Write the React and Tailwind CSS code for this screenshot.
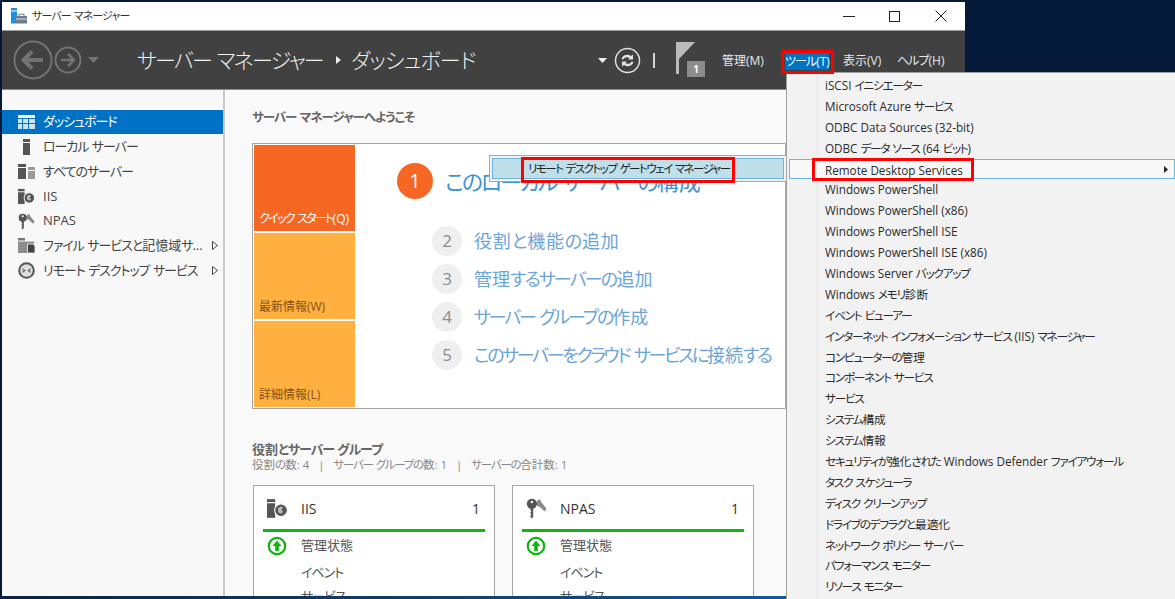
const FONT = "font-['Open_Sans','Noto_Sans_CJK_JP',sans-serif] [font-feature-settings:'palt']";

// Kana in the reference's UI font are much narrower than its kanji and Latin.
function K({ t, cls = "tracking-[-0.08em]" }) {
  return t.split(/([ぁ-んァ-ヶー・]+)/).map((part, i) =>
    i % 2 ? <span key={i} className={cls}>{part}</span> : part
  );
}

const sideItems = [
  { t: "ダッシュボード", icon: "dash", active: true },
  { t: "ローカル サーバー", icon: "local" },
  { t: "すべてのサーバー", icon: "all" },
  { t: "IIS", icon: "iis" },
  { t: "NPAS", icon: "npas" },
  { t: "ファイル サービスと記憶域サ...", icon: "file", arrow: true },
  { t: "リモート デスクトップ サービス", icon: "rds", arrow: true },
];

const menuItems = [
  "iSCSI イニシエーター", "Microsoft Azure サービス", "ODBC Data Sources (32-bit)", "ODBC データ ソース (64 ビット)",
  "Remote Desktop Services", "Windows PowerShell", "Windows PowerShell (x86)", "Windows PowerShell ISE",
  "Windows PowerShell ISE (x86)", "Windows Server バックアップ", "Windows メモリ診断", "イベント ビューアー",
  "インターネット インフォメーション サービス (IIS) マネージャー", "コンピューターの管理", "コンポーネント サービス", "サービス",
  "システム構成", "システム情報", "セキュリティが強化された Windows Defender ファイアウォール", "タスク スケジューラ",
  "ディスク クリーンアップ", "ドライブのデフラグと最適化", "ネットワーク ポリシー サーバー", "パフォーマンス モニター", "リソース モニター",
];

const steps = [
  { t: "役割と機能の追加", cls: "tracking-[0em]", outer: "tracking-[0.7px]" },
  { t: "管理するサーバーの追加", cls: "tracking-[-0.1em]", outer: "" },
  { t: "サーバー グループの作成", cls: "tracking-[-0.12em]", outer: "" },
  { t: "このサーバーをクラウド サービスに接続する", cls: "tracking-[-0.13em]", outer: "" },
];

function IisIcon({ c = "#555", size = 18 }) {
  return (
    <svg width={size} height={size} viewBox="0 0 18 18">
      <rect x="0" y="1" width="7" height="2.5" fill={c} />
      <rect x="0" y="4.5" width="7" height="12.5" fill={c} />
      <circle cx="12" cy="10.5" r="5.5" fill={c} stroke="#f8f8f8" strokeWidth="1" />
      <path d="M9.5 9c1-1.5 3-2 4-1 .5 1-1 1-1 2s1.500 1 1 2.500c-1 1-3 1-4-.5z" fill="#bbb" />
    </svg>
  );
}
function KeyIcon({ c = "#555", size = 18 }) {
  return (
    <svg width={size} height={size} viewBox="0 0 18 18">
      <path d="M8 4.500 L10.500 1.500 C12 1 13 2 13 3.500 L17.500 9 L16 11.500 L11 7 C10 7.500 9 6.500 8 4.500Z" fill="#8a8a8a" />
      <circle cx="5" cy="5" r="4.300" fill={c} />
      <circle cx="5" cy="3.400" r="1.100" fill="#f8f8f8" />
      <path d="M3.800 8h2.400v8l-1.200 1.600L3.800 16v-1.200l1-.8-1-.8v-1l1-.8-1-.8z" fill={c} />
    </svg>
  );
}
function SideIcon({ name }) {
  if (name === "dash")
    return (
      <svg width="17" height="14" viewBox="0 0 17 14">
        <rect width="17" height="3" fill="#fff" />
        <path d="M0 4h4v4H0zM5 4h5v4H5zM11 4h6v4h-6zM0 9h4v5H0zM5 9h5v5H5zM11 9h6v5h-6z" fill="#cfe3f3" />
      </svg>
    );
  if (name === "local")
    return (
      <svg width="17" height="16" viewBox="0 0 17 16">
        <rect x="5" y="0" width="7" height="3" fill="#555" />
        <rect x="5" y="4" width="7" height="12" fill="#555" />
      </svg>
    );
  if (name === "all")
    return (
      <svg width="17" height="15" viewBox="0 0 17 15">
        <rect x="0" y="0" width="8" height="3" fill="#555" />
        <rect x="0" y="4" width="8" height="11" fill="#555" />
        <rect x="10" y="3" width="7" height="3" fill="#999" />
        <rect x="10" y="7" width="7" height="8" fill="#999" />
      </svg>
    );
  if (name === "iis") return <IisIcon size={17} />;
  if (name === "npas") return <KeyIcon size={17} />;
  if (name === "file")
    return (
      <svg width="17" height="15" viewBox="0 0 17 15">
        <rect x="0" y="0" width="7" height="2.500" fill="#777" />
        <rect x="0" y="3.500" width="16" height="11.500" fill="#8c8c8c" />
        <path d="M9.500 6H15l2 2v7H9.500z" fill="#444" stroke="#f8f8f8" strokeWidth=".8" />
      </svg>
    );
  return (
    <svg width="17" height="17" viewBox="0 0 17 17">
      <circle cx="8.500" cy="8.500" r="7.300" fill="#ddd" stroke="#555" strokeWidth="2" />
      <path d="M4.500 7l2.300 1.600-2.300 1.600M12.500 7l-2.300 1.600 2.300 1.600" stroke="#555" strokeWidth="1.100" fill="none" />
    </svg>
  );
}

function UpIcon() {
  return (
    <svg width="20" height="20" viewBox="0 0 20 20">
      <circle cx="10" cy="10" r="8.200" fill="#fff" stroke="#0fb40f" strokeWidth="2.200" />
      <path d="M10 4.500 L14.500 10 H11.800 V15 H8.200 V10 H5.500Z" fill="#0fb40f" />
    </svg>
  );
}

function RoleCard({ icon, title }) {
  return (
    <div className="w-[242px] h-[120px] border border-[#a6a6a6] bg-white overflow-hidden px-[9px] shrink-0">
      <div className="flex items-center h-[46px] pt-[2px] border-b-[3px] border-[#0fb80f] text-[14px] text-[#333]">
        <div className="w-[38px] pl-[4px] flex items-center">{icon}</div>
        <span className="flex-1">{title}</span>
        <span className="pr-[5px]">1</span>
      </div>
      <div className="flex items-center h-[28px] text-[13px] text-[#555]">
        <div className="w-[38px] pl-[4px] flex items-center"><UpIcon /></div>
        <span>管理状態</span>
      </div>
      <div className="pl-[38px] h-[25px] leading-[25px] text-[13px] text-[#555]"><K t="イベント" /></div>
      <div className="pl-[38px] h-[24px] leading-[22px] text-[13px] text-[#555]"><K t="サービス" /></div>
    </div>
  );
}

const RedBox = ({ className }) => <div className={"absolute border-[3px] border-[#ff0000] " + className} />;

export default function App() {
  return (
    <div className={"relative w-[1175px] h-[599px] overflow-hidden bg-[#041a38] pt-[2px] flex flex-col " + FONT}>
      <div className="w-[963px] h-[594px] ml-[2px] bg-white flex flex-col overflow-hidden shrink-0">
        {/* title bar */}
        <div className="h-[29px] flex items-center bg-white border-b border-[#9a9a9a] shrink-0">
          <svg className="ml-[9px]" width="17" height="16" viewBox="0 0 17 16">
            <rect x="0" y="0" width="6" height="2.500" fill="#1f8ee0" />
            <rect x="0" y="3.500" width="6" height="12" fill="#1f8ee0" />
            <path d="M5 8h11v7.500H5z" fill="#6d7d8c" />
            <path d="M8 8V6.200h5V8" stroke="#6d7d8c" fill="none" />
            <rect x="5" y="10.500" width="11" height="1" fill="#dde" />
          </svg>
          <span className="ml-[4px] text-[11px] text-[#333]"><K t="サーバー マネージャー" /></span>
          <div className="ml-auto flex items-center">
            <div className="w-[12px] h-[1px] bg-[#222] mr-[34px]" />
            <div className="w-[11px] h-[11px] border border-[#222] mr-[35px]" />
            <svg className="mr-[18px]" width="12" height="12" viewBox="0 0 12 12"><path d="M.5.500l11 11M11.500.500l-11 11" stroke="#222" strokeWidth="1" /></svg>
          </div>
        </div>
        {/* header */}
        <div className="h-[59px] bg-[#414141] flex items-center shrink-0 border-b border-[#8a8a8a]">
          <svg className="ml-[11px]" width="40" height="40" viewBox="0 0 40 40">
            <circle cx="20" cy="20" r="18.500" fill="none" stroke="#737373" strokeWidth="2" />
            <path d="M30 20H11M19 11.500 10.500 20l8.500 8.500" fill="none" stroke="#737373" strokeWidth="4" />
          </svg>
          <svg className="ml-[1px]" width="28" height="28" viewBox="0 0 28 28">
            <circle cx="14" cy="14" r="12.500" fill="none" stroke="#737373" strokeWidth="2" />
            <path d="M7 14h13M14 8l6 6-6 6" fill="none" stroke="#737373" strokeWidth="2.600" />
          </svg>
          <svg className="ml-[6px]" width="11" height="6" viewBox="0 0 11 6"><path d="M0 0h11L5.500 6z" fill="#737373" /></svg>
          <span className="ml-[38px] mt-[1px] text-[21px] text-[#f0f0f0] font-light whitespace-nowrap"><K t="サーバー マネージャー" /></span>
          <svg className="ml-[13px]" width="5" height="8" viewBox="0 0 5 8"><path d="M0 0l5 4-5 4z" fill="#eee" /></svg>
          <span className="ml-[10px] mt-[1px] text-[21px] text-[#f0f0f0] font-light whitespace-nowrap"><K t="ダッシュボード" cls="tracking-[-0.04em]" /></span>
          <div className="ml-auto flex items-center text-[12px] text-[#e8e8e8]">
            <svg width="9" height="5" viewBox="0 0 9 5"><path d="M0 0h9L4.500 5z" fill="#eee" /></svg>
            <svg className="ml-[7px]" width="27" height="27" viewBox="0 0 27 27">
              <circle cx="13.500" cy="13.500" r="12" fill="none" stroke="#e0e0e0" strokeWidth="1.500" />
              <path d="M7.500 12c1-4 6-5.500 9.500-3l2-1.500v5h-5l1.500-1.500c-2-1.500-5-1-6 1.500zM19.500 15c-1 4-6 5.500-9.500 3l-2 1.500v-5h5L11.500 16c2 1.500 5 1 6-1.500z" fill="#e0e0e0" />
            </svg>
            <div className="ml-[12px] w-[2px] h-[15px] bg-[#d0d0d0]" />
            <div className="relative ml-[21px] w-[30px] h-[34px] mt-[-2px]">
              <svg width="20" height="32" viewBox="0 0 20 32">
                <path d="M0 0h3v32H0z" fill="#bbb" />
                <path d="M3 0h16L3 17z" fill="#bbb" />
              </svg>
              <div className="absolute left-[11px] top-[19px] w-[18px] h-[16px] bg-[#8c8c8c] text-white text-[10px] font-bold flex items-center justify-center">1</div>
            </div>
            <span className="ml-[16px] mt-[2px] w-[43px] whitespace-nowrap">管理(M)</span>
            <span className="ml-[20px] mt-[2px] w-[44px] bg-[#0072c6] text-white text-center leading-[17px] h-[17px] whitespace-nowrap"><K t="ツール" />(T)</span>
            <span className="ml-[14px] mt-[2px] w-[41px] whitespace-nowrap">表示(V)</span>
            <span className="ml-[13px] mt-[2px] w-[45px] mr-[23px] whitespace-nowrap"><K t="ヘルプ" />(H)</span>
          </div>
        </div>
        {/* body */}
        <div className="flex flex-1 min-h-0">
          <aside className="w-[221px] shrink-0 bg-[#f8f8f8] pt-[19.5px]">
            {sideItems.map((it) => (
              <div key={it.t} className={"h-[24.8px] flex items-center text-[13px] " + (it.active ? "bg-[#0072c6] text-white" : "text-[#444]")}>
                <div className="w-[41px] pl-[16px] flex items-center"><SideIcon name={it.icon} /></div>
                <span className="flex-1 whitespace-nowrap"><K t={it.t} /></span>
                {it.arrow && (
                  <svg className="mr-[5px]" width="6" height="9" viewBox="0 0 6 9"><path d="M.5.500l5 4-5 4z" fill="#fff" stroke="#444" /></svg>
                )}
              </div>
            ))}
          </aside>
          <main className="flex-1 min-w-0 bg-[#f9f9f9] border-l-2 border-[#c9c9c9] pl-[27px] pt-[20px] overflow-hidden">
            <div className="text-[12.5px] font-semibold text-[#666] leading-[16px]"><K t="サーバー マネージャーへようこそ" /></div>
            <div className="mt-[17px] w-[534px] h-[266px] border border-[#a8a8a8] bg-white flex p-[1px]">
              <div className="w-[101px] shrink-0 flex flex-col gap-[2px] text-[12px] whitespace-nowrap">
                <div className="flex-1 bg-[#f56722] text-white flex items-end px-[5px] pb-[3px]"><span><K t="クイック スタート(Q)" cls="tracking-[-0.14em]" /></span></div>
                <div className="flex-1 bg-[#ffb03e] text-[#8a5015] flex items-end px-[5px] pb-[3px]">最新情報(W)</div>
                <div className="flex-1 bg-[#ffb03e] text-[#8a5015] flex items-end px-[5px] pb-[3px]">詳細情報(L)</div>
              </div>
              <div className="pl-[42px] pt-[18px]">
                <div className="flex items-center h-[36px]">
                  <div className="w-[36px] h-[36px] rounded-full bg-[#f56722] text-white text-[20px] flex items-center justify-center">1</div>
                  <span className="ml-[12px] text-[22px] text-[#3f92d2] whitespace-nowrap"><K t="このローカル サーバーの構成" cls="tracking-[-0.1em]" /></span>
                </div>
                <div className="mt-[27px] flex flex-col gap-[8px] ml-[35px]">
                  {steps.map((s, i) => (
                    <div key={s.t} className="flex items-center h-[30px]">
                      <div className="w-[30px] h-[30px] rounded-full bg-[#efefef] text-[#8c8c8c] text-[17px] flex items-center justify-center shrink-0">{i + 2}</div>
                      <span className={"ml-[12px] text-[18px] text-[#6ca4d8] whitespace-nowrap " + s.outer}><K t={s.t} cls={s.cls} /></span>
                    </div>
                  ))}
                </div>
              </div>
            </div>
            <div className="mt-[32px] text-[13px] font-semibold text-[#666] leading-[16px]"><K t="役割とサーバー グループ" /></div>
            <div className="text-[11.5px] text-[#888] leading-[16px]"><K t="役割の数: 4" />&nbsp;&nbsp;&nbsp;|&nbsp;&nbsp;&nbsp;<K t="サーバー グループの数: 1" cls="tracking-[-0.11em]" />&nbsp;&nbsp;&nbsp;|&nbsp;&nbsp;&nbsp;<K t="サーバーの合計数: 1" cls="tracking-[-0.11em]" /></div>
            <div className="mt-[12px] ml-[1px] flex gap-[17px]">
              <RoleCard icon={<IisIcon size={21} />} title="IIS" />
              <RoleCard icon={<KeyIcon size={21} />} title="NPAS" />
            </div>
          </main>
        </div>
      </div>
      <div className="h-[3px] bg-linear-to-r from-[#0a2240] to-[#0b78c8] shrink-0" />

      {/* tools menu */}
      <div className="absolute left-[786px] top-[72px] w-[389px] h-[527px] bg-[#f2f2f2] border-l border-t border-[#a0a0a0] pt-[2px] text-[11.7px] text-[#2a2a2a]">
        <div className="absolute left-[30px] top-0 bottom-0 w-px bg-[#e2e2e2]" />
        {menuItems.map((m, i) => (
          <div key={m} className={"relative h-[20.9px] leading-[20.9px] whitespace-nowrap " + (i === 4 ? "ml-[2px] pl-[35px] bg-[#f8f8f8] border border-[#6bb7e3] leading-[17px]" : "pl-[38px]")}>
            <K t={m} cls="tracking-[-0.11em]" />
            {i === 4 && (
              <svg className="absolute right-[6px] top-[6px]" width="4" height="7" viewBox="0 0 4 7"><path d="M0 0l4 3.500L0 7z" fill="#222" /></svg>
            )}
          </div>
        ))}
      </div>

      {/* submenu */}
      <div className="absolute left-[489px] top-[155px] w-[298px] h-[27px] bg-[#f2f2f2] border border-[#a8a8a8] p-[2px]">
        <div className="h-full bg-[#bfdfeb] border border-[#6db4d8] pl-[35px] text-[11.5px] leading-[19px] text-[#222] whitespace-nowrap"><K t="リモート デスクトップ ゲートウェイ マネージャー" cls="tracking-[-0.13em]" /></div>
      </div>

      {/* red highlights */}
      <RedBox className="left-[781px] top-[50px] w-[53px] h-[24px]" />
      <RedBox className="left-[812px] top-[158px] w-[162px] h-[23px]" />
      <RedBox className="left-[521px] top-[157px] w-[214px] h-[26px]" />
    </div>
  );
}
